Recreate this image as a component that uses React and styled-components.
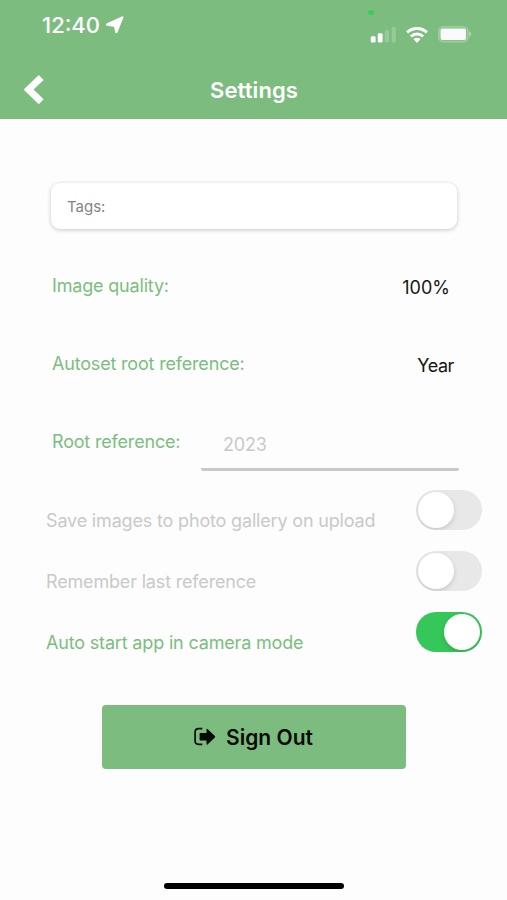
import { useState } from "react";
import styled, { createGlobalStyle, css } from "styled-components";

export default function App() {
  const [toggles, setToggles] = useState([
    { name: "Save images to photo gallery on upload", on: false },
    { name: "Remember last reference", on: false },
    { name: "Auto start app in camera mode", on: true },
  ]);
  const flip = (index) =>
    setToggles(toggles.map((t, i) => (i === index ? { ...t, on: !t.on } : t)));

  return (
    <Screen>
      <GlobalStyle />
      <Header>
        <StatusBar />
        <NavBar>
          <BackButton aria-label="Back">
            <svg width="20" height="30" viewBox="0 0 20 30">
              <path d="M17.2 2.6 4.6 14.6l12.6 12.2" fill="none" stroke="#fff" strokeWidth="6.9" />
            </svg>
          </BackButton>
          <Title>Settings</Title>
        </NavBar>
      </Header>
      <TagsCard>Tags:</TagsCard>
      <Fields>
        <Field>
          <Label>Image quality:</Label>
          <Value $right="9px">100%</Value>
        </Field>
        <Field>
          <Label>Autoset root reference:</Label>
          <Value $right="5px" $spacing="-0.4px">Year</Value>
        </Field>
        <Field>
          <Label>Root reference:</Label>
          <Reference>2023</Reference>
        </Field>
      </Fields>
      <ToggleList>
        {toggles.map((t, i) => (
          <ToggleRow key={t.name}>
            <ToggleText $on={t.on}>{t.name}</ToggleText>
            <Switch role="switch" aria-checked={t.on} $on={t.on} onClick={() => flip(i)}>
              <Knob />
            </Switch>
          </ToggleRow>
        ))}
      </ToggleList>
      <SignOut>
        <svg width="22" height="20" viewBox="0 0 22 20">
          <path
            d="M8.3 1.7H4.6Q1.1 1.7 1.1 5.2v8.6q0 3.5 3.5 3.5h3.7"
            fill="none"
            stroke="#050a05"
            strokeWidth="1.7"
          />
          <path
            d="M6.3 5.9h6.2V2.4q0-1.3 1-.4l7.4 7q.7.7 0 1.4l-7.4 7q-1 .8-1-.4v-3.5H6.3q-.7 0-.7-.7V6.6q0-.7.7-.7Z"
            fill="#050a05"
          />
        </svg>
        <span>Sign Out</span>
      </SignOut>
      <HomeIndicator />
    </Screen>
  );
}

function StatusBar() {
  return (
    <Status>
      <Time>12:40</Time>
      <svg width="18" height="18" viewBox="0 0 18 18">
        <path
          d="M16.8 1 11 15.8q-.8 1.5-1.2 0L8.8 10.2 1.4 9Q0 8.6 1.3 7.9Z"
          fill="#fff"
          stroke="#fff"
          strokeWidth="1.5"
          strokeLinejoin="round"
        />
      </svg>
      <Indicators>
        <CameraDot />
        <svg width="26" height="16" viewBox="0 0 26 16">
          <rect x=".8" y="9.3" width="4.8" height="6.2" rx="1.3" fill="#fff" />
          <rect x="7.8" y="6.2" width="4.8" height="9.3" rx="1.3" fill="#fff" />
          <rect x="14.8" y="3.1" width="4.2" height="12.4" rx="1.3" fill="#fff" opacity=".2" />
          <rect x="21.7" y="0" width="4.2" height="15.5" rx="1.3" fill="#fff" opacity=".2" />
        </svg>
        <svg width="22" height="17" viewBox="0 0 22 17">
          <g fill="none" stroke="#fff" strokeWidth="3">
            <path d="M1.1 6.4a14.2 14.2 0 0 1 19.8 0" />
            <path d="M4.9 10.5a8.8 8.8 0 0 1 12.2 0" />
          </g>
          <path d="M7.4 13.1q3.6-2.7 7.2 0L11 16.9Z" fill="#fff" />
        </svg>
        <svg width="34" height="17" viewBox="0 0 34 17">
          <rect x=".9" y=".9" width="29" height="14.8" rx="4.6" fill="none" stroke="#fff" strokeWidth="1.8" opacity=".25" />
          <rect x="2.5" y="2.6" width="25.6" height="11.3" rx="2" fill="#fafafa" />
          <path d="M31.2 5.6q2 .7 2 2.6t-2 2.6Z" fill="#fff" opacity=".4" />
        </svg>
      </Indicators>
    </Status>
  );
}

const GlobalStyle = createGlobalStyle`
  * {
    box-sizing: border-box;
  }
  body {
    margin: 0;
    background: #fdfdfd;
    font-family: Inter, "Liberation Sans", sans-serif;
  }
`;

const Screen = styled.div`
  display: flex;
  flex-direction: column;
  width: 507px;
  height: 900px;
  background: #fdfdfd;
  overflow: hidden;
`;

const Header = styled.header`
  height: 119px;
  flex: none;
  background: #7cbd7f;
  color: #fff;
`;

const Status = styled.div`
  display: flex;
  align-items: flex-start;
  height: 60px;
  padding: 15px 35px 0 42px;

  > svg {
    margin: 1px 0 0 6px;
  }
`;

const Time = styled.span`
  width: 58px;
  font-size: 22px;
  line-height: 20px;
  font-weight: 500;
  white-space: nowrap;
`;

const Indicators = styled.div`
  position: relative;
  display: flex;
  align-items: center;
  gap: 10px;
  margin: 11px 0 0 auto;
`;

const CameraDot = styled.i`
  position: absolute;
  top: -16px;
  left: -2px;
  width: 6px;
  height: 5px;
  border-radius: 3px;
  background: #35cf5b;
`;

const NavBar = styled.div`
  display: grid;
  grid-template-columns: 60px 1fr 60px;
  align-items: center;
  height: 59px;
`;

const BackButton = styled.button`
  display: flex;
  width: 20px;
  margin-left: 24px;
  padding: 0;
  border: 0;
  background: none;
`;

const Title = styled.h1`
  margin: 1px 0 0 1px;
  font-size: 22px;
  line-height: 28px;
  font-weight: 600;
  letter-spacing: 0.1px;
  text-align: center;
`;

const TagsCard = styled.div`
  flex: none;
  height: 46px;
  margin: 64px 50px 0 51px;
  padding: 0 16px;
  border-radius: 9px;
  background: #fff;
  box-shadow: 0 1px 4px rgba(0, 0, 0, 0.22);
  color: #858585;
  font-size: 15px;
  line-height: 47px;
`;

const Fields = styled.div`
  margin: 18px 48px 0 52px;
`;

const Field = styled.div`
  display: flex;
  align-items: center;
  justify-content: space-between;
  height: 78px;
`;

const Label = styled.span`
  color: #7cbd7f;
  font-size: 18px;
  line-height: 24px;
  letter-spacing: -0.18px;
  white-space: nowrap;
`;

const Value = styled.span`
  margin: 4px ${({ $right }) => $right} 0 0;
  color: #151515;
  font-size: 18px;
  line-height: 24px;
  letter-spacing: ${({ $spacing }) => $spacing || "0"};
`;

const Reference = styled.div`
  width: 258px;
  height: 55px;
  margin-top: 2px;
  padding-left: 22px;
  border-bottom: 3px solid #c9c9c9;
  border-radius: 2px;
  color: #c9c9c9;
  font-size: 18px;
  line-height: 58px;
  letter-spacing: -0.2px;
`;

const ToggleList = styled.div`
  display: grid;
  gap: 21px;
  margin: 9px 25px 0 46px;
`;

const ToggleRow = styled.div`
  display: flex;
  justify-content: space-between;
  height: 40px;
`;

const ToggleText = styled.span`
  padding-top: 19px;
  color: ${({ $on }) => ($on ? "#7cbd7f" : "#c9c9c9")};
  font-size: 18px;
  line-height: 24px;
  letter-spacing: -0.17px;
  white-space: nowrap;
`;

const Knob = styled.span`
  width: 36px;
  height: 36px;
  border-radius: 50%;
  background: #fff;
  box-shadow: 0 2px 5px rgba(0, 0, 0, 0.15);
`;

const Switch = styled.button`
  display: flex;
  align-items: center;
  width: 66px;
  height: 40px;
  padding: 0 2px;
  border: 0;
  border-radius: 20px;
  background: #e8e8e8;
  overflow: hidden;

  ${({ $on }) =>
    $on &&
    css`
      justify-content: flex-end;
      background: #35c759;
    `};
`;

const SignOut = styled.button`
  display: flex;
  flex: none;
  align-items: center;
  justify-content: center;
  gap: 10px;
  width: 304px;
  height: 64px;
  margin: 53px 0 0 102px;
  padding: 0 1px 0 0;
  border: 0;
  border-radius: 4px;
  background: #7cbd7f;
  color: #050a05;
  font-family: inherit;
  font-size: 21px;
  font-weight: 600;
`;

const HomeIndicator = styled.div`
  flex: none;
  width: 180px;
  height: 6px;
  margin: auto 0 11px 164px;
  border-radius: 3px;
  background: #000;
`;
